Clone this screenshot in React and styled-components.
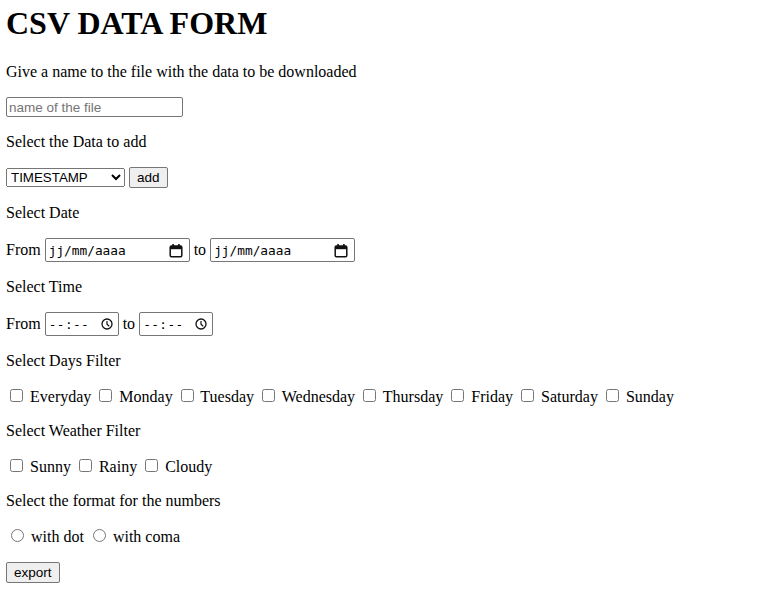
import React from "react";
import styled, { createGlobalStyle } from "styled-components";

const GlobalStyle = createGlobalStyle`
  body {
    margin: 0 0 0 6px;
    font-family: "Liberation Serif", "Times New Roman", serif;
    font-size: 16px;
    color: #000;
    background: #fff;
  }
`;

const Form = styled.form`
  display: block;
`;

const Title = styled.h1`
  margin: 5px 0 21px;
  font-size: 32px;
  font-weight: bold;
`;

const Text = styled.p`
  margin: 16px 0;
`;

const Row = styled.p`
  margin: 16px 0;
`;

const NameInput = styled.input`
  width: 177px;
  height: 20px;
  box-sizing: border-box;
  font: 13.5px "Liberation Sans", Arial, sans-serif;
  padding: 1px 2px;
  border: 1px solid #767676;
  border-radius: 2px;
  margin: 0;

  &::placeholder {
    color: #757575;
  }
`;

const Select = styled.select`
  width: 119px;
  height: 19px;
  box-sizing: border-box;
  font: 13.333px "Liberation Sans", Arial, sans-serif;
  margin: 0;
`;

const Button = styled.button`
  font: 13.5px "Liberation Sans", Arial, sans-serif;
  margin: 0;
  padding: 1px 7px;
  height: 21px;
  background: #efefef;
  border: 1px solid #767676;
  border-radius: 2px;
  color: #000;
`;

const Field = styled.span`
  display: inline-flex;
  align-items: center;
  justify-content: space-between;
  box-sizing: border-box;
  width: ${(p) => p.$width}px;
  height: 24px;
  padding: 0 ${(p) => p.$right}px 0 3px;
  border: 1px solid #767676;
  border-radius: 2px;
  background: #fff;
  vertical-align: baseline;
  font: 12.8px "DejaVu Sans Mono", "Liberation Mono", monospace;
  color: #000;
`;

const FieldText = styled.span`
  letter-spacing: ${(p) => p.$spacing || 0}px;
  white-space: pre;
`;

const Check = styled.input`
  margin: 3px 3px 3px 4px;
`;

const Radio = styled.input`
  margin: 3px 3px 0 5px;
`;

const CalendarIcon = () => (
  <svg width="14" height="15" viewBox="0 0 14 15">
    <rect x="1.2" y="3" width="11.6" height="10.8" rx="1.2" fill="none" stroke="#111" strokeWidth="1.5" />
    <rect x="1.2" y="3" width="11.6" height="3.2" fill="#111" />
    <rect x="3.3" y="1" width="1.6" height="3" fill="#111" />
    <rect x="9.1" y="1" width="1.6" height="3" fill="#111" />
  </svg>
);

const ClockIcon = () => (
  <svg width="12" height="12" viewBox="0 0 12 12">
    <circle cx="6" cy="6" r="5" fill="none" stroke="#111" strokeWidth="1.3" />
    <path d="M6 3v3.2l2.2 2" fill="none" stroke="#111" strokeWidth="1.2" />
  </svg>
);

const DateField = () => (
  <Field $width={145} $right={6}>
    <FieldText>jj/mm/aaaa</FieldText>
    <CalendarIcon />
  </Field>
);

const TimeField = () => (
  <Field $width={74} $right={5}>
    <FieldText $spacing={0.4}>--:--</FieldText>
    <ClockIcon />
  </Field>
);

const days = ["Everyday", "Monday", "Tuesday", "Wednesday", "Thursday", "Friday", "Saturday", "Sunday"];
const weather = ["Sunny", "Rainy", "Cloudy"];

export default function App() {
  return (
    <>
      <GlobalStyle />
      <Form onSubmit={(e) => e.preventDefault()}>
        <Title>CSV DATA FORM</Title>
        <Text>Give a name to the file with the data to be downloaded</Text>
        <Row>
          <NameInput name="filename" placeholder="name of the file" />
        </Row>
        <Text>Select the Data to add</Text>
        <Row>
          <Select name="data">
            <option>TIMESTAMP</option>
          </Select>{" "}
          <Button type="button">add</Button>
        </Row>
        <Text>Select Date</Text>
        <Row>
          From <DateField /> to <DateField />
        </Row>
        <Text>Select Time</Text>
        <Row>
          From <TimeField /> to <TimeField />
        </Row>
        <Text>Select Days Filter</Text>
        <Row>
          {days.map((d, i) => (
            <React.Fragment key={d}>
              <label>
                <Check type="checkbox" name={d} /> {d}
              </label>
              {i < days.length - 1 ? " " : null}
            </React.Fragment>
          ))}
        </Row>
        <Text>Select Weather Filter</Text>
        <Row>
          {weather.map((w, i) => (
            <React.Fragment key={w}>
              <label>
                <Check type="checkbox" name={w} /> {w}
              </label>
              {i < weather.length - 1 ? " " : null}
            </React.Fragment>
          ))}
        </Row>
        <Text>Select the format for the numbers</Text>
        <Row>
          <label>
            <Radio type="radio" name="format" /> with dot
          </label>{" "}
          <label>
            <Radio type="radio" name="format" /> with coma
          </label>
        </Row>
        <Row>
          <Button type="submit">export</Button>
        </Row>
      </Form>
    </>
  );
}
